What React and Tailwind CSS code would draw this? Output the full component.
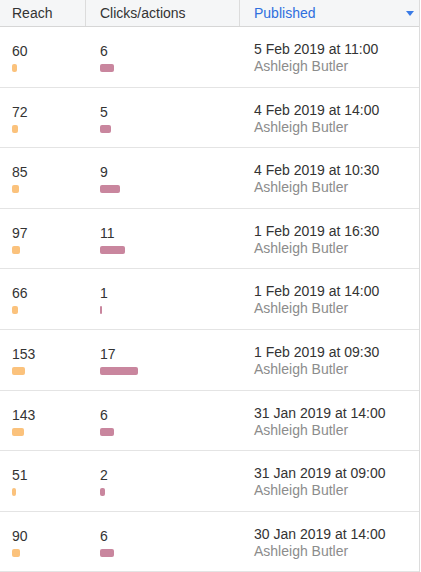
const rows = [
  { reach: 60, clicks: 6, date: "5 Feb 2019 at 11:00" },
  { reach: 72, clicks: 5, date: "4 Feb 2019 at 14:00" },
  { reach: 85, clicks: 9, date: "4 Feb 2019 at 10:30" },
  { reach: 97, clicks: 11, date: "1 Feb 2019 at 16:30" },
  { reach: 66, clicks: 1, date: "1 Feb 2019 at 14:00" },
  { reach: 153, clicks: 17, date: "1 Feb 2019 at 09:30" },
  { reach: 143, clicks: 6, date: "31 Jan 2019 at 14:00" },
  { reach: 51, clicks: 2, date: "31 Jan 2019 at 09:00" },
  { reach: 90, clicks: 6, date: "30 Jan 2019 at 14:00" },
];

export default function App() {
  return (
    <div
      className="w-[420px] h-[572px] overflow-hidden bg-white border-r border-[#dcdcdc] text-[14px] text-[#333]"
      style={{ fontFamily: '"Liberation Sans", Arial, sans-serif' }}
    >
      <div className="grid grid-cols-[86px_154px_1fr] h-[27px] bg-[#f5f6f7] border-b border-[#d6d6d6]">
        <div className="flex items-center pl-3 border-r border-[#dcdcdc]">Reach</div>
        <div className="flex items-center pl-[14px] border-r border-[#dcdcdc]">Clicks/actions</div>
        <div className="flex items-center justify-between pl-[14px] pr-[5px] text-[#2f6fde]">
          <span>Published</span>
          <svg width="8" height="5" viewBox="0 0 8 5">
            <path d="M0 0h8L4 5z" fill="#3a7be6" />
          </svg>
        </div>
      </div>
      {rows.map((r, i) => (
        <div
          key={i}
          className="grid grid-cols-[86px_154px_1fr] h-[60.6px] border-b border-[#e4e4e4] leading-[17px]"
        >
          <div className="pl-3 pt-[16px]">
            <div>{r.reach}</div>
            <div
              className="mt-[4px] h-[8px] rounded-[2px] bg-[#fbc27c]"
              style={{ width: Math.max(4, Math.round(r.reach * 0.085)) }}
            />
          </div>
          <div className="pl-[14px] pt-[16px]">
            <div>{r.clicks}</div>
            <div
              className="mt-[4px] h-[8px] rounded-[2px] bg-[#c9869e]"
              style={{ width: Math.max(2, Math.round(r.clicks * 2.25)) }}
            />
          </div>
          <div className="pl-[14px] pt-[14px]">
            <div>{r.date}</div>
            <div className="text-[#8c8c8c]">Ashleigh Butler</div>
          </div>
        </div>
      ))}
    </div>
  );
}
